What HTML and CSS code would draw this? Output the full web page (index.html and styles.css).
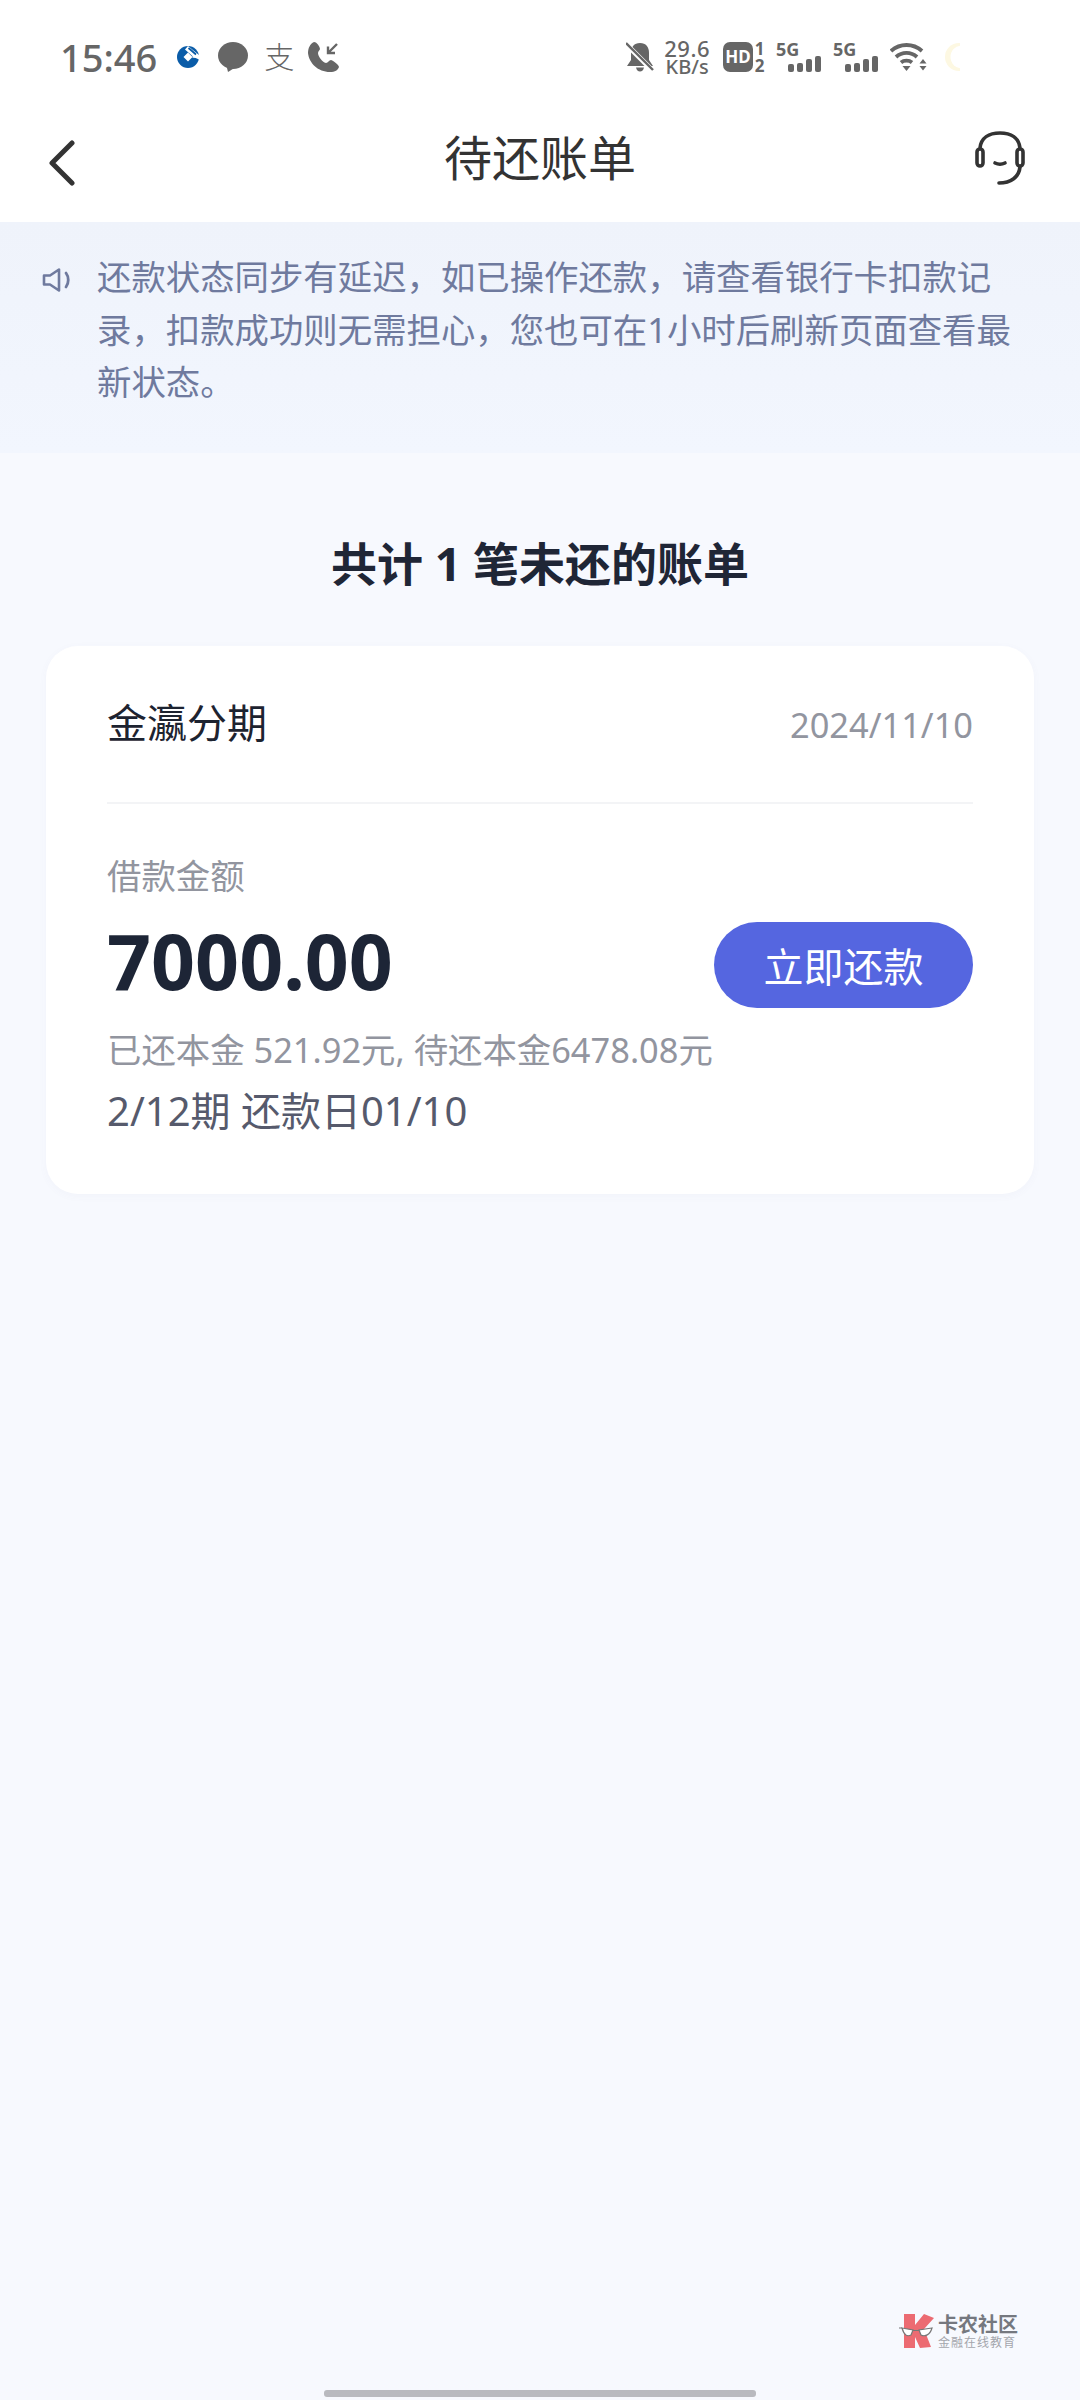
FILE: index.html

```html
<!DOCTYPE html>
<html lang="zh-CN">
<head>
  <meta charset="UTF-8">
  <meta name="viewport" content="width=device-width, initial-scale=1.0">
  <title>待还账单</title>
  <link rel="stylesheet" href="styles.css">
</head>
<body>
  <div class="page">
    <!-- Status bar -->
    <div class="status-bar">
      <div class="status-left">
        <span class="time">15:46</span>
        <svg class="ic-ccb" width="22" height="22" viewBox="0 0 22 22">
          <circle cx="11" cy="11" r="11" fill="#0a5ca8"/>
          <path d="M11 6.500L15.500 11L11 15.500L6.500 11Z" fill="#fff"/>
          <path d="M11 0L22 9L22 13.500L16.500 11L8 3.500Z" fill="#fff"/>
          <path d="M11.500 2L19 8.500" stroke="#0a5ca8" stroke-width="1.800" fill="none"/>
          <path d="M15.500 11H22" stroke="#fff" stroke-width="1.500"/>
        </svg>
        <svg class="ic-chat" width="30" height="30" viewBox="0 0 30 30">
          <ellipse cx="15" cy="13.500" rx="15" ry="13.500" fill="#666"/>
          <path d="M8 22L10 30L18 25Z" fill="#666"/>
        </svg>
        <span class="ic-pay">支</span>
        <svg class="ic-call" width="32" height="30" viewBox="0 0 32 30">
          <path d="M6 0C2 2 0 6 0 11C1 21 10 30 22 30C27 30 30 28 31 25C31 23 26 19 23 18C21 18 20 21 18 21C14 20 10 14 10 11C10 9 12 8 12 7C12 5 9 0 6 0Z" fill="#666"/>
          <path d="M29 2L20 11M20 4.500V11H27" stroke="#666" stroke-width="2.400" fill="none"/>
        </svg>
      </div>
      <div class="status-right">
        <svg class="ic-bell" width="28" height="30" viewBox="0 0 28 30">
          <path d="M14 1C8 1 5 5 5 11V18L1 24H27L23 18V11C23 5 20 1 14 1Z" fill="#666"/>
          <path d="M10 25.500C10.500 28 12 29.500 14 29.500C16 29.500 17.500 28 18 25.500Z" fill="#666"/>
          <path d="M-1 1L27 29" stroke="#fff" stroke-width="5"/>
          <path d="M0 1L27 28" stroke="#666" stroke-width="2.400"/>
        </svg>
        <div class="speed">
          <span class="speed-num">29.6</span>
          <span class="speed-unit">KB/s</span>
        </div>
        <div class="hd-wrap">
          <span class="hd">HD</span>
          <div class="sim-nums"><span>1</span><span>2</span></div>
        </div>
        <div class="signal">
          <span class="signal-label">5G</span>
          <div class="bars"><i class="b1"></i><i class="b2"></i><i class="b3"></i><i class="b4"></i></div>
        </div>
        <div class="signal">
          <span class="signal-label">5G</span>
          <div class="bars"><i class="b1"></i><i class="b2"></i><i class="b3"></i><i class="b4"></i></div>
        </div>
        <svg class="ic-wifi" width="38" height="30" viewBox="0 0 38 30">
          <path d="M1 9C10 1 23 1 32 9M6 15C12 9.500 21 9.500 27 15M11 20.500C14 18 19 18 22 20.500" stroke="#666" stroke-width="3.800" fill="none"/>
          <path d="M12.500 24H20.500L16.500 29Z" fill="#666"/>
          <path d="M33 17L36.500 21.500H29.500ZM29.500 24H36.500L33 28.500Z" fill="#666"/>
        </svg>
        <svg class="moon" width="18" height="28" viewBox="0 0 18 28">
          <circle cx="17" cy="14" r="14" fill="#fdf8e2"/>
          <circle cx="20" cy="14" r="11.500" fill="#fff"/>
        </svg>
      </div>
    </div>

    <!-- Nav bar -->
    <div class="nav">
      <div class="nav-side">
        <svg class="ic-back" width="27" height="46" viewBox="0 0 27 46">
          <path d="M24 3L4 23L24 43" stroke="#333" stroke-width="5" stroke-linecap="round" stroke-linejoin="round" fill="none"/>
        </svg>
      </div>
      <h1>待还账单</h1>
      <div class="nav-side nav-right">
        <svg class="ic-service" width="50" height="54" viewBox="0 0 50 54">
          <path d="M5 17C6 7 14 2 25 2C36 2 44 7 45 17" stroke="#333" stroke-width="3.600" fill="none"/>
          <rect x="2" y="18" width="6" height="17" rx="3" stroke="#333" stroke-width="3.600" fill="#fff"/>
          <rect x="42" y="18" width="6" height="17" rx="3" stroke="#333" stroke-width="3.600" fill="#fff"/>
          <path d="M20 32C23 33.500 27 33.500 30 32" stroke="#333" stroke-width="3.600" stroke-linecap="round" fill="none"/>
          <path d="M45 36C44 46 36 52 24 52" stroke="#333" stroke-width="3.600" stroke-linecap="round" fill="none"/>
        </svg>
      </div>
    </div>

    <!-- Notice -->
    <div class="notice">
      <svg class="notice-icon" width="31" height="24" viewBox="0 0 31 24">
        <path d="M2 7.500H8L17 1.500V22.500L8 16.500H2Z" stroke="#6f7a9e" stroke-width="2.600" stroke-linejoin="round" fill="none"/>
        <path d="M24 5C27 9 27 15 24 19" stroke="#6f7a9e" stroke-width="2.800" stroke-linecap="round" fill="none"/>
      </svg>
      <p>还款状态同步有延迟，如已操作还款，请查看银行卡扣款记录，扣款成功则无需担心，您也可在1小时后刷新页面查看最新状态。</p>
    </div>

    <h2>共计 1 笔未还的账单</h2>

    <div class="card">
      <div class="card-head">
        <span class="product">金瀛分期</span>
        <span class="date">2024/11/10</span>
      </div>
      <div class="card-body">
        <div class="label">借款金额</div>
        <div class="amount-row">
          <span class="amount">7000.00</span>
          <button class="pay-btn">立即还款</button>
        </div>
        <div class="repaid">已还本金 521.92元, 待还本金6478.08元</div>
        <div class="term">2/12期 还款日01/10</div>
      </div>
    </div>

    <!-- Forum watermark -->
    <div class="watermark">
      <svg width="36" height="36" viewBox="0 0 36 36">
        <path d="M5 1H16V12L25 1L35 5L25 16L32 34L21 35L16 24V35H5Z" fill="#ec6b72"/>
        <path d="M3 15L14 17L12 22C8 24 5 22 3 15ZM33 15L20 17L22 22C26 24 31 22 33 15Z" fill="#fff" stroke="#777" stroke-width="1.200"/>
        <path d="M0 15H3M14 17.500H20" stroke="#777" stroke-width="1.200"/>
      </svg>
      <div class="wm-text">
        <span class="wm-name">卡农社区</span>
        <span class="wm-sub">金融在线教育</span>
      </div>
    </div>

    <div class="home-bar"></div>
  </div>
</body>
</html>
```

FILE: styles.css

```css
/* Reset default margin and padding */
* {
  margin: 0;
  padding: 0;
  box-sizing: border-box;
}

body {
  background: #f7f9fe;
  font-family: "Noto Sans", "Noto Sans CJK SC", sans-serif;
}

.page {
  position: relative;
  width: 1080px;
  height: 2400px;
  overflow: hidden;
  display: flex;
  flex-direction: column;
}

/* Status bar */
.status-bar {
  height: 100px;
  background: #fff;
  display: flex;
  justify-content: space-between;
  align-items: center;
  padding: 14px 120px 0 60px;
  color: #666;
}

.status-left,
.status-right {
  display: flex;
  align-items: center;
}

.time {
  font-size: 38px;
  font-weight: 500;
  line-height: 44px;
  color: #666;
}

.ic-ccb { margin-left: 20px; }
.ic-chat { margin-left: 19px; }
.ic-call { margin-left: 14px; }

.ic-pay {
  width: 30px;
  margin-left: 16px;
  font-size: 30px;
  font-weight: 300;
  line-height: 30px;
  text-align: center;
}

.ic-wifi { margin-left: 12px; }

.speed {
  display: flex;
  flex-direction: column;
  align-items: center;
  margin-left: 10px;
  font-weight: 500;
}

.speed-num {
  font-size: 22px;
  line-height: 20px;
  letter-spacing: 0.5px;
}

.speed-unit {
  font-size: 20px;
  line-height: 18px;
}

.hd-wrap {
  display: flex;
  align-items: center;
  margin-left: 13px;
}

.hd {
  width: 30px;
  height: 30px;
  background: #666;
  border-radius: 7px;
  color: #fff;
  font-size: 17px;
  font-weight: 700;
  line-height: 30px;
  text-align: center;
}

.sim-nums {
  display: flex;
  flex-direction: column;
  align-items: center;
  width: 13px;
  font-size: 17px;
  font-weight: 700;
  line-height: 17px;
}

.signal {
  display: flex;
  flex-direction: column;
  width: 45px;
  height: 30px;
  margin-left: 10px;
}

.signal + .signal {
  margin-left: 12px;
}

.signal-label {
  font-size: 18px;
  font-weight: 700;
  line-height: 14px;
}

.bars {
  display: flex;
  align-items: flex-end;
  justify-content: flex-end;
  gap: 3px;
  height: 16px;
}

.bars i {
  display: block;
  width: 6px;
  background: #666;
  border-radius: 2px;
}

.bars .b1 { height: 8px; }
.bars .b2 { height: 9px; }
.bars .b3 { height: 13px; }
.bars .b4 { height: 16px; }

.moon {
  margin-left: 14px;
}

/* Nav bar */
.nav {
  height: 122px;
  background: #fff;
  display: grid;
  grid-template-columns: 1fr auto 1fr;
  align-items: center;
  padding: 0 48px 7px;
}

.nav-side {
  display: flex;
  align-items: center;
}

.nav-right {
  justify-content: flex-end;
}

.ic-back {
  margin-top: 10px;
}

.ic-service {
  margin-right: 7px;
}

.nav h1 {
  font-size: 48px;
  font-weight: 400;
  line-height: 60px;
  color: #333;
}

/* Notice */
.notice {
  display: flex;
  align-items: flex-start;
  gap: 24px;
  height: 231px;
  padding: 29px 40px 0 42px;
  background: linear-gradient(#eff3fb, #f2f6fe);
}

.notice-icon {
  flex-shrink: 0;
  margin-top: 17px;
}

.notice p {
  font-size: 34.400px;
  line-height: 52.500px;
  color: #6f7a9e;
}

h2 {
  margin-top: 80px;
  margin-bottom: 53px;
  font-size: 46px;
  font-weight: 700;
  line-height: 60px;
  text-align: center;
  color: #1f2636;
}

/* Card */
.card {
  margin: 0 46px;
  padding: 0 61px 58px;
  background: #fff;
  border-radius: 32px;
  box-shadow: 0 2px 8px rgba(100, 110, 160, 0.04);
}

.card-head {
  display: flex;
  justify-content: space-between;
  align-items: center;
  height: 158px;
  padding-top: 3px;
  border-bottom: 2px solid #f3f4f6;
}

.product {
  margin-bottom: 9px;
  font-size: 40px;
  color: #1d2330;
}

.date {
  margin-bottom: 3px;
  font-size: 34.400px;
  color: #92959f;
}

.card-body {
  padding-top: 49px;
}

.label {
  font-size: 34.400px;
  line-height: 46px;
  color: #92959f;
}

.amount-row {
  display: flex;
  justify-content: space-between;
  align-items: center;
  margin-top: 23px;
}

.amount {
  margin-bottom: 8px;
  font-size: 77px;
  font-weight: 700;
  line-height: 78px;
  color: #1d2536;
}

.pay-btn {
  width: 259px;
  height: 86px;
  background: #5566e0;
  border: none;
  border-radius: 43px;
  color: #fff;
  font-family: inherit;
  font-size: 40px;
}

.repaid {
  margin-top: 19px;
  font-size: 34.400px;
  line-height: 46px;
  color: #92959f;
}

.term {
  margin-top: 13px;
  font-size: 40px;
  line-height: 50px;
  color: #565a6c;
}

/* Watermark and home bar lie over the page */
.watermark {
  position: absolute;
  left: 899px;
  top: 2313px;
  display: flex;
  align-items: center;
  gap: 3px;
}

.wm-text {
  display: flex;
  flex-direction: column;
}

.wm-name {
  font-size: 20px;
  font-weight: 700;
  line-height: 23px;
  color: #75787f;
}

.wm-sub {
  font-size: 12px;
  line-height: 13px;
  letter-spacing: 1px;
  color: #a4a6ac;
}

.home-bar {
  position: absolute;
  left: 324px;
  bottom: 3px;
  width: 432px;
  height: 7px;
  background: #b9babf;
  border-radius: 3px;
}
```
